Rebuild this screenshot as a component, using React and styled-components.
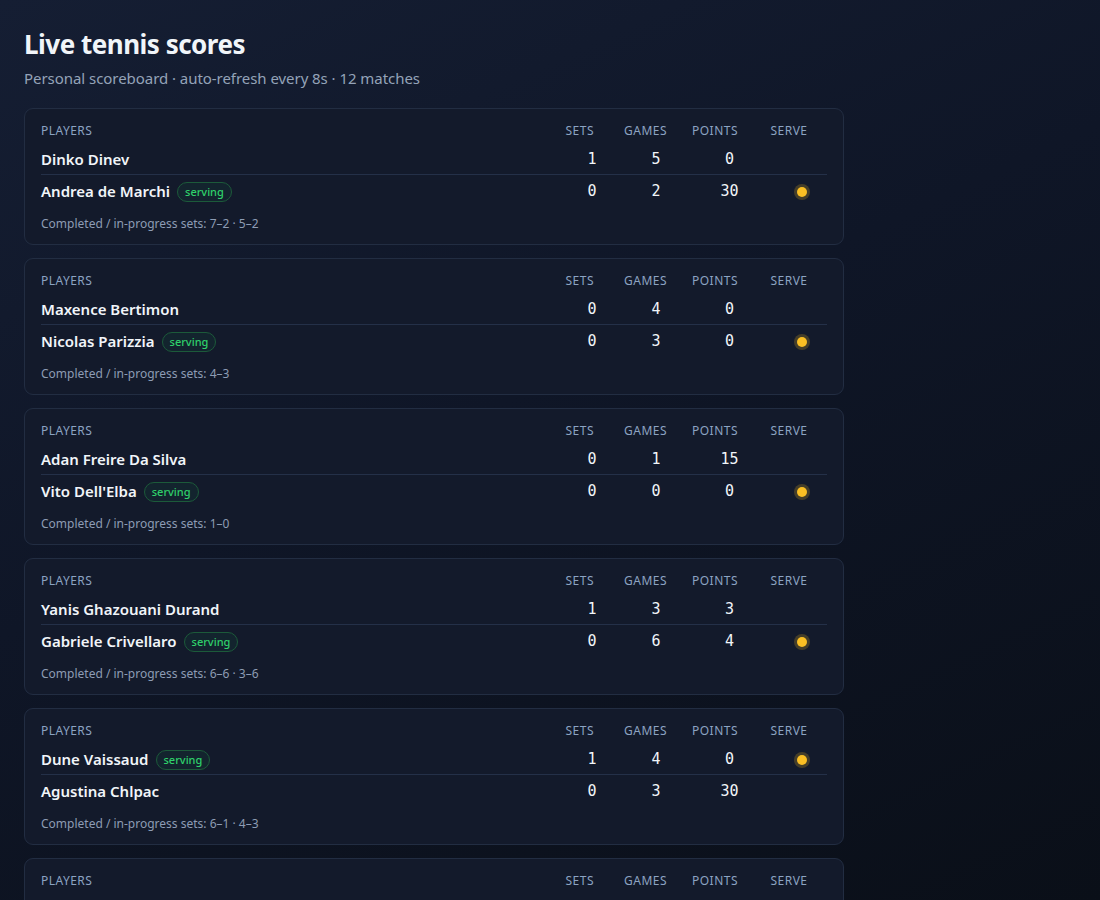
import React from 'react';
import styled, { createGlobalStyle } from 'styled-components';

const matches = [
    { id: 1, players: [{ name: 'Dinko Dinev', sets: 1, games: 5, points: '0' }, { name: 'Andrea de Marchi', sets: 0, games: 2, points: '30' }], server: 1, history: '7–2 · 5–2' },
    { id: 2, players: [{ name: 'Maxence Bertimon', sets: 0, games: 4, points: '0' }, { name: 'Nicolas Parizzia', sets: 0, games: 3, points: '0' }], server: 1, history: '4–3' },
    { id: 3, players: [{ name: 'Adan Freire Da Silva', sets: 0, games: 1, points: '15' }, { name: "Vito Dell'Elba", sets: 0, games: 0, points: '0' }], server: 1, history: '1–0' },
    { id: 4, players: [{ name: 'Yanis Ghazouani Durand', sets: 1, games: 3, points: '3' }, { name: 'Gabriele Crivellaro', sets: 0, games: 6, points: '4' }], server: 1, history: '6–6 · 3–6' },
    { id: 5, players: [{ name: 'Dune Vaissaud', sets: 1, games: 4, points: '0' }, { name: 'Agustina Chlpac', sets: 0, games: 3, points: '30' }], server: 0, history: '6–1 · 4–3' },
    { id: 6, players: [{ name: 'Lukas Neumayer', sets: 0, games: 2, points: '40' }, { name: 'Carlos Sanchez Jover', sets: 0, games: 2, points: '15' }], server: 0, history: '2–2' },
    { id: 7, players: [{ name: 'Lilli Tagger', sets: 1, games: 0, points: '0' }, { name: 'Ekaterina Ovcharenko', sets: 0, games: 1, points: '15' }], server: 1, history: '6–4 · 0–1' },
    { id: 8, players: [{ name: 'Hugo Grenier', sets: 0, games: 5, points: '30' }, { name: 'Matteo Gigante', sets: 0, games: 5, points: '30' }], server: 0, history: '5–5' },
    { id: 9, players: [{ name: 'Nikola Bartunkova', sets: 1, games: 2, points: '0' }, { name: 'Julia Riera', sets: 1, games: 1, points: '15' }], server: 1, history: '6–3 · 4–6 · 2–1' },
    { id: 10, players: [{ name: 'Pablo Llamas Ruiz', sets: 0, games: 3, points: '40' }, { name: 'Jan Choinski', sets: 0, games: 0, points: '0' }], server: 0, history: '3–0' },
    { id: 11, players: [{ name: 'Sara Errani', sets: 0, games: 4, points: '15' }, { name: 'Kaja Juvan', sets: 0, games: 4, points: '15' }], server: 1, history: '4–4' },
    { id: 12, players: [{ name: 'Arthur Gea', sets: 1, games: 1, points: '0' }, { name: 'Titouan Droguet', sets: 0, games: 2, points: '30' }], server: 0, history: '7–6 · 1–2' },
];

// headPad: right padding of the label, shift: offset of the centred value
const columns = [
    { key: 'sets', label: 'Sets', headPad: 15, shift: 34 },
    { key: 'games', label: 'Games', headPad: 12, shift: 24 },
    { key: 'points', label: 'Points', headPad: 13, shift: 29 },
];

const App = () => {
    return (
        <>
            <GlobalStyle />
            <Page>
                <Title>Live tennis scores</Title>
                <Subtitle>Personal scoreboard · auto-refresh every 8s · {matches.length} matches</Subtitle>
                <List>
                    {matches.map((match) => (
                        <Card key={match.id}>
                            <Grid>
                                <HeadCell>Players</HeadCell>
                                {columns.map((col) => (
                                    <HeadCell key={col.key} $align="right" $pad={col.headPad}>{col.label}</HeadCell>
                                ))}
                                <HeadCell $align="center">Serve</HeadCell>

                                {match.players.map((player, i) => {
                                    const serving = match.server === i;
                                    const last = i === match.players.length - 1;
                                    return (
                                        <React.Fragment key={player.name}>
                                            <NameCell $last={last}>
                                                <Name>{player.name}</Name>
                                                {serving && <Badge>serving</Badge>}
                                            </NameCell>
                                            {columns.map((col) => (
                                                <ValueCell key={col.key} $last={last} $shift={col.shift}>{player[col.key]}</ValueCell>
                                            ))}
                                            <ServeCell $last={last}>{serving && <ServeDot />}</ServeCell>
                                        </React.Fragment>
                                    );
                                })}
                            </Grid>
                            <History>Completed / in-progress sets: {match.history}</History>
                        </Card>
                    ))}
                </List>
            </Page>
        </>
    );
};

export default App;

const GlobalStyle = createGlobalStyle`
    html, body {
        margin: 0;
        padding: 0;
    }

    body {
        min-height: 100vh;
        background: linear-gradient(155deg, #151e33 0%, #0f1627 45%, #0a0f18 100%);
        background-attachment: fixed;
        color: #f1f5f9;
        font-family: "Noto Sans", "Open Sans", sans-serif;
    }
`;

const Page = styled.div`
    padding: 26px 24px 24px;
`;

const Title = styled.h1`
    margin: 0;
    font-size: 26px;
    line-height: 36px;
    font-weight: 700;
    color: #f1f5f9;
    letter-spacing: -0.5px;
`;

const Subtitle = styled.p`
    margin: 6px 0 20px;
    font-size: 15px;
    line-height: 20px;
    color: #94a3b8;
    letter-spacing: -0.05px;
`;

const List = styled.div`
    display: flex;
    flex-direction: column;
    gap: 13px;
    width: 820px;
`;

const Card = styled.div`
    background: #131a2b;
    border: 1px solid #222d42;
    border-radius: 9px;
    padding: 14px 16px 11px;
`;

const Grid = styled.div`
    display: grid;
    grid-template-columns: 1fr 68px 70px 72px 76px;
    align-items: center;
`;

const HeadCell = styled.div`
    font-size: 12px;
    line-height: 16px;
    letter-spacing: 0.04em;
    text-transform: uppercase;
    color: #8ca3c2;
    text-align: ${(p) => p.$align || 'left'};
    padding-right: ${(p) => p.$pad || 0}px;
    padding-bottom: 4px;
`;

const RowCell = styled.div`
    height: 31px;
    display: flex;
    align-items: center;
    border-bottom: ${(p) => (p.$last ? 'none' : '1px solid #243048')};
`;

const NameCell = styled(RowCell)`
    gap: 7px;
`;

const Name = styled.span`
    font-size: 15px;
    font-weight: 600;
    color: #f1f5f9;
`;

const Badge = styled.span`
    font-size: 11px;
    font-weight: 500;
    line-height: 18px;
    padding: 0 7px;
    border-radius: 999px;
    color: #2fd16b;
    background: rgba(34, 197, 94, 0.06);
    border: 1px solid #1c5a3a;
    margin-top: 3px;
`;

const ValueCell = styled(RowCell)`
    justify-content: center;
    padding-left: ${(p) => p.$shift}px;
    font-family: "DejaVu Sans Mono", "Liberation Mono", monospace;
    font-size: 15px;
    color: #f1f5f9;
`;

const ServeCell = styled(RowCell)`
    justify-content: flex-end;
    padding-right: 20px;
`;

const ServeDot = styled.span`
    width: 10px;
    height: 10px;
    border-radius: 50%;
    background: #fbbf24;
    box-shadow: 0 0 0 3px rgba(251, 191, 36, 0.22);
    margin-top: 2px;
`;

const History = styled.div`
    margin-top: 9px;
    font-size: 12px;
    line-height: 18px;
    color: #8d9cb4;
`;
